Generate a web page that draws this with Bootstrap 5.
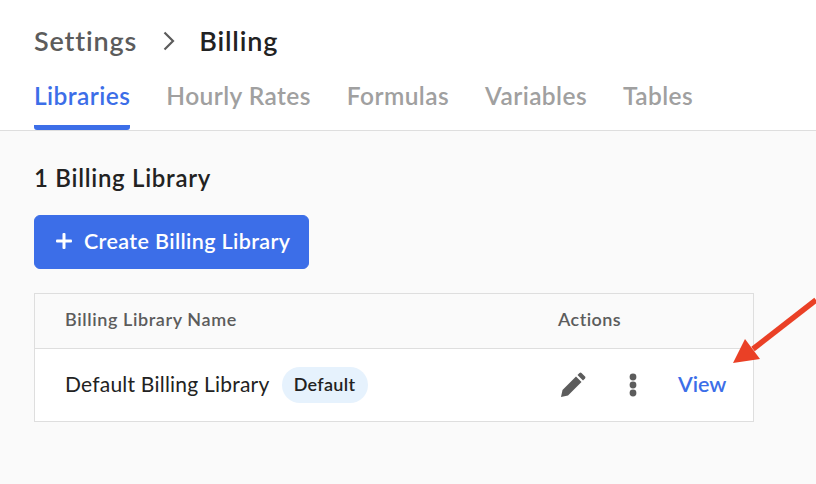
<!DOCTYPE html>
<html lang="en">
<head>
  <meta charset="UTF-8" />
  <title>Billing</title>
  <link href="https://cdn.jsdelivr.net/npm/bootstrap@5.3.3/dist/css/bootstrap.min.css" rel="stylesheet">
  <style>
    body {
      width: 816px;
      height: 484px;
      overflow: hidden;
      position: relative;
      background-color: #fafafa;
      font-family: Lato, "Open Sans", sans-serif;
      color: #222;
    }
    .top-head {
      height: 131px;
      padding: 24px 34px 0;
      background: #fff;
      border-bottom: 1px solid #dedede;
    }
    .crumbs { height: 34px; font-size: 27px; font-weight: 600; line-height: 34px; letter-spacing: .85px; }
    .crumb-parent { color: #5c5c5c; }
    .crumb-sep { margin: 0 24px 0 26px; }
    .tabs-row { gap: 36px; margin-top: 21px; }
    .tab-link {
      display: block;
      height: 51px;
      padding-top: 1px;
      font-size: 24.5px;
      font-weight: 600;
      line-height: 32px;
      letter-spacing: .42px;
      color: #a0a0a0;
      text-decoration: none;
      border-bottom: 5px solid transparent;
    }
    .tab-link.on { color: #3c6ee8; border-bottom-color: #3c6ee8; border-radius: 0 0 3px 3px; }
    .body-wrap { padding: 33px 34px 0; }
    .count-title { font-size: 24px; font-weight: 600; line-height: 28px; letter-spacing: .72px; margin: 0 0 23px; color: #222; }
    .btn-create {
      height: 54px;
      width: 275px;
      padding: 0 0 2px 21px;
      background: #3c6ee8;
      border-color: #3c6ee8;
      border-radius: 6px;
      color: #fff;
      font-size: 21.5px;
      font-weight: 600;
      letter-spacing: .37px;
      gap: 12px;
    }
    .lib-box { width: 720px; margin-top: 24px; border: 1px solid #dedede; }
    .lib-head {
      height: 55px;
      border-bottom: 1px solid #dedede;
      padding: 0 0 4px 30px;
      font-size: 18px;
      font-weight: 600;
      letter-spacing: .6px;
      color: #5c5c5c;
    }
    .actions-label { letter-spacing: .45px; }
    .lib-row { height: 72px; background: #fff; padding-left: 30px; font-size: 21px; letter-spacing: .22px; color: #222; }
    .name-col { width: 493px; padding-bottom: 2px; }
    .default-pill {
      margin: 2px 0 0 12px;
      height: 36px;
      width: 86px;
      border-radius: 18px;
      background: #e6f2fd;
      font-size: 18px;
      font-weight: 600;
      letter-spacing: .3px;
      padding-bottom: 2px;
      color: #222;
    }
    .pencil-ico { margin-left: 2px; }
    .dots-ico { margin-left: 42px; }
    .view-link { margin-left: 40px; padding-bottom: 2px; font-size: 21.5px; font-weight: 600; letter-spacing: 0; color: #3c6ee8; text-decoration: none; }
    .arrow-over { position: absolute; left: 720px; top: 290px; }
  </style>
</head>
<body>

  <div class="top-head">
    <div class="crumbs d-flex align-items-center">
      <span class="crumb-parent">Settings</span>
      <svg class="crumb-sep" width="12" height="20" viewBox="0 0 12 20" fill="none" stroke="#5c5c5c" stroke-width="2.2"><path d="M1.5 1.5 10 10l-8.5 8.500"/></svg>
      <span>Billing</span>
    </div>
    <div class="tabs-row d-flex">
      <a class="tab-link on" href="#">Libraries</a>
      <a class="tab-link" href="#">Hourly Rates</a>
      <a class="tab-link" href="#">Formulas</a>
      <a class="tab-link" href="#">Variables</a>
      <a class="tab-link" href="#">Tables</a>
    </div>
  </div>

  <div class="body-wrap">
    <h2 class="count-title">1 Billing Library</h2>
    <button class="btn btn-create d-flex align-items-center">
      <svg width="16" height="16" viewBox="0 0 16 16" fill="#fff"><rect x="6.500" y="0" width="3" height="16" rx="1"/><rect x="0" y="6.500" width="16" height="3" rx="1"/></svg>
      Create Billing Library
    </button>

    <div class="lib-box">
      <div class="lib-head d-flex align-items-center">
        <div class="name-col p-0">Billing Library Name</div>
        <div class="actions-label">Actions</div>
      </div>
      <div class="lib-row d-flex align-items-center">
        <div class="name-col d-flex align-items-center">
          Default Billing Library
          <span class="default-pill d-flex align-items-center justify-content-center">Default</span>
        </div>
        <svg class="pencil-ico" width="26" height="26" viewBox="0 0 26 26" fill="#5c5c5c"><path d="M1 25l1.500-7L16 4.500l5.500 5.500L8 23.500z"/><path d="M17.500 3l2-2a1.500 1.500 0 0 1 2 0l3.500 3.500a1.500 1.500 0 0 1 0 2l-2 2z"/></svg>
        <svg class="dots-ico" width="10" height="24" viewBox="0 0 10 24" fill="#5c5c5c"><circle cx="5" cy="4" r="3.400"/><circle cx="5" cy="12" r="3.400"/><circle cx="5" cy="20" r="3.400"/></svg>
        <a class="view-link" href="#">View</a>
      </div>
    </div>
  </div>

  <svg class="arrow-over" width="96" height="80" viewBox="0 0 96 80"><path d="M96 10 33 59" stroke="#ea4026" stroke-width="5.500" fill="none"/><path d="M13 73 25 49 40 69z" fill="#ea4026"/></svg>

</body>
</html>
